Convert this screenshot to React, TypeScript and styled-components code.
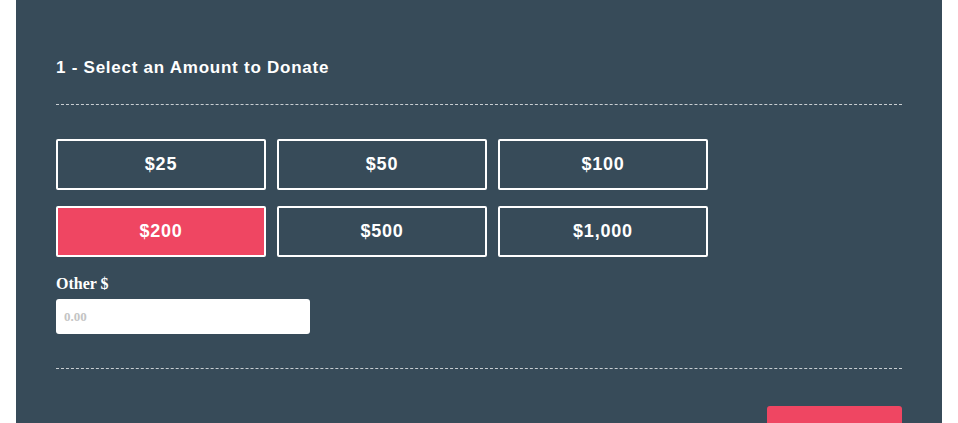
import React from 'react';
import styled, { createGlobalStyle } from 'styled-components';

const GlobalStyle = createGlobalStyle`
  html, body {
    margin: 0;
    padding: 0;
    background: #ffffff;
  }
`;

const Page = styled.div`
  padding: 0 16px;
  height: 423px;
  overflow: hidden;
`;

const Panel = styled.div`
  background-color: #374b59;
  padding: 57px 40px 40px 40px;
  min-height: 423px;
  box-sizing: border-box;
`;

const Title = styled.h2`
  margin: 0;
  font-family: 'Liberation Sans', Arial, sans-serif;
  font-size: 17px;
  letter-spacing: 0.75px;
  font-weight: bold;
  color: #ffffff;
  line-height: 21px;
`;

const Divider = styled.hr<{ top: number; bottom: number }>`
  border: none;
  border-top: 1px dashed #c9ced2;
  margin: ${p => p.top}px 0 ${p => p.bottom}px 0;
  height: 0;
`;

const AmountGrid = styled.div`
  display: grid;
  grid-template-columns: repeat(3, 210px);
  grid-auto-rows: 51px;
  column-gap: 11px;
  row-gap: 16px;
`;

const AmountButton = styled.button<{ selected?: boolean }>`
  box-sizing: border-box;
  border: 2px solid #ffffff;
  border-radius: 2px;
  background-color: ${p => (p.selected ? '#ef4662' : 'transparent')};
  color: #ffffff;
  font-family: 'Liberation Sans', Arial, sans-serif;
  font-size: 18px;
  letter-spacing: 0.8px;
  font-weight: bold;
  cursor: pointer;
  padding: 0;
`;

const OtherField = styled.div`
  margin-top: 18px;
  display: flex;
  flex-direction: column;
  gap: 6px;
`;

const Label = styled.label`
  font-family: 'Liberation Serif', 'Times New Roman', serif;
  font-size: 16px;
  font-weight: bold;
  color: #ffffff;
  line-height: 18px;
`;

const Input = styled.input`
  box-sizing: border-box;
  width: 254px;
  height: 35px;
  border: none;
  border-radius: 3px;
  padding: 0 8px;
  font-family: 'Liberation Serif', 'Times New Roman', serif;
  font-size: 13px;
  font-weight: bold;
  outline: none;

  &::placeholder {
    color: #c4c4c4;
  }
`;

const Footer = styled.div`
  display: flex;
  justify-content: flex-end;
`;

const SubmitButton = styled.button`
  width: 135px;
  height: 44px;
  border: none;
  border-radius: 3px;
  background-color: #ef4662;
  color: #ffffff;
  font-family: 'Liberation Sans', Arial, sans-serif;
  font-size: 16px;
  font-weight: bold;
`;

const amounts = ['$25', '$50', '$100', '$200', '$500', '$1,000'];

export default function App() {
  const [selected, setSelected] = React.useState('$200');
  const [other, setOther] = React.useState('');

  return (
    <>
      <GlobalStyle />
      <Page>
        <Panel>
          <Title>1 - Select an Amount to Donate</Title>
          <Divider top={26} bottom={34} />
          <AmountGrid>
            {amounts.map(a => (
              <AmountButton key={a} selected={a === selected} onClick={() => setSelected(a)}>
                {a}
              </AmountButton>
            ))}
          </AmountGrid>
          <OtherField>
            <Label htmlFor="other">Other $</Label>
            <Input
              id="other"
              placeholder="0.00"
              value={other}
              onChange={e => setOther(e.target.value)}
            />
          </OtherField>
          <Divider top={34} bottom={37} />
          <Footer>
            <SubmitButton />
          </Footer>
        </Panel>
      </Page>
    </>
  );
}
